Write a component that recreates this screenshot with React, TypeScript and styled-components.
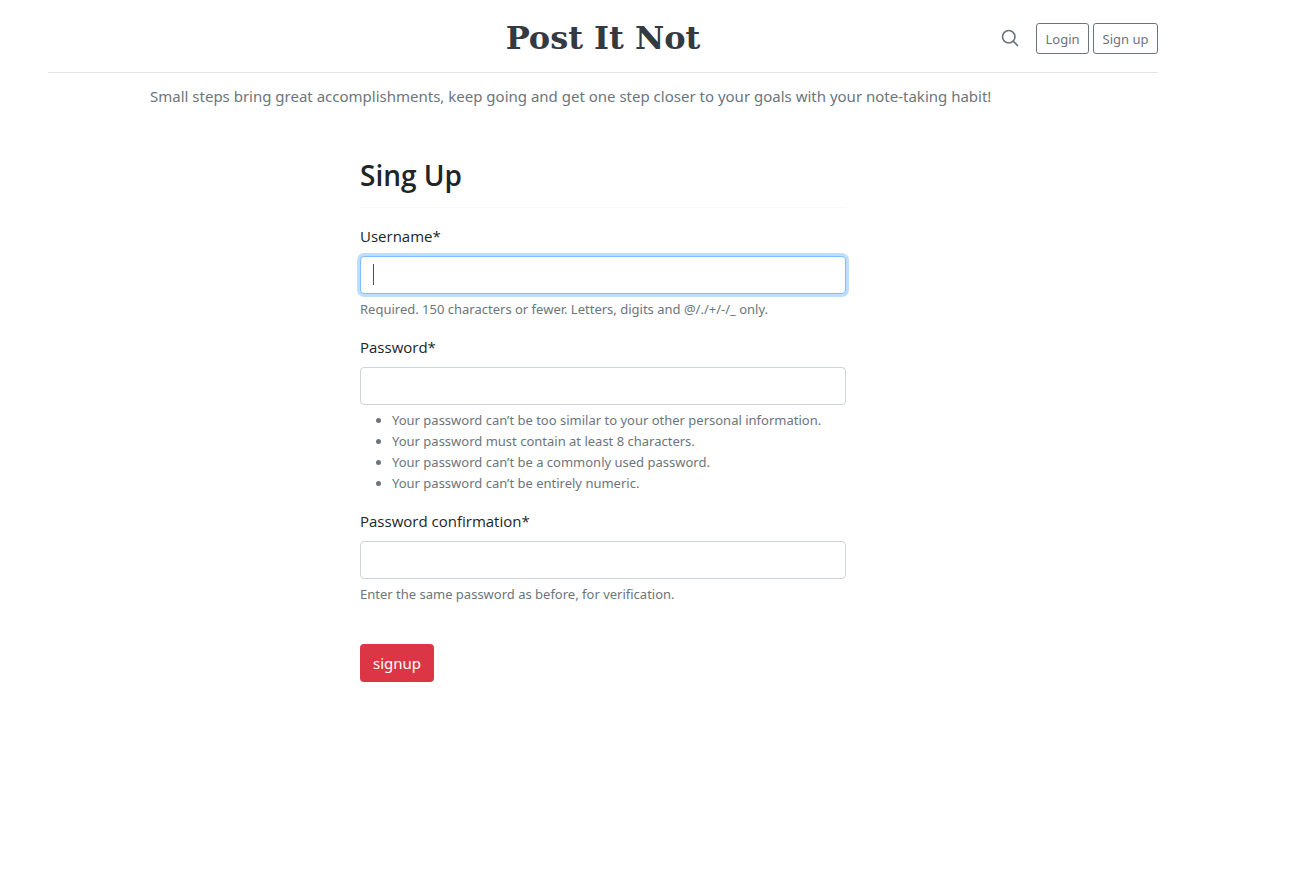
import React, { useState } from "react";
import styled, { createGlobalStyle } from "styled-components";

const mutedFont = `"Segoe UI", "Noto Sans", "Open Sans", sans-serif`;

const GlobalStyle = createGlobalStyle`
  *, *::before, *::after { box-sizing: border-box; }
  body {
    margin: 0;
    background: #fff;
    color: #212529;
    font-family: "Segoe UI", "Open Sans", "Noto Sans", sans-serif;
    font-size: 15px;
    line-height: 24px;
  }
`;

const Page = styled.div`
  padding: 0 99px 48px 0;
`;

const Container = styled.div`
  width: 100%;
  max-width: 1140px;
  margin: 0 auto;
  padding: 0 15px;
`;

const Header = styled.header`
  display: grid;
  grid-template-columns: 1fr auto 1fr;
  align-items: center;
  height: 73px;
  padding-top: 4px;
  border-bottom: 1px solid #e5e5e5;
`;

const Brand = styled.a`
  grid-column: 2;
  color: #343a40;
  font-family: Georgia, "DejaVu Serif", serif;
  font-size: 32px;
  font-weight: 700;
  line-height: 40px;
  text-decoration: none;
`;

const HeaderActions = styled.nav`
  display: flex;
  justify-content: flex-end;
  align-items: center;
  gap: 4px;
`;

const SearchLink = styled.a`
  display: flex;
  margin-right: 12px;
  color: #6c757d;
`;

const OutlineLink = styled.a<{ $width: number }>`
  min-width: ${(p) => p.$width}px;
  padding: 5px 8px 3px;
  border: 1px solid #6c757d;
  border-radius: 3px;
  color: #6c757d;
  font-family: ${mutedFont};
  font-size: 13px;
  line-height: 21px;
  text-align: center;
  text-decoration: none;
`;

const Tagline = styled.p`
  margin: 0;
  padding: 11px 0 0 102px;
  color: #6c757d;
  font-family: ${mutedFont};
`;

const Form = styled.form`
  width: 100%;
  max-width: 486px;
  margin: 47px auto 0;
`;

const Fieldset = styled.fieldset`
  min-width: 0;
  margin: 0;
  padding: 0;
  border: 0;
`;

const Legend = styled.legend`
  display: block;
  width: 100%;
  margin-bottom: 16px;
  padding: 0 0 12px;
  border-bottom: 1px solid #f8f9fa;
  font-size: 28px;
  font-weight: 600;
  line-height: 40px;
`;

const Field = styled.div`
  margin-bottom: 15px;
`;

const Label = styled.label`
  display: block;
  margin-bottom: 8px;
`;

const InputWrap = styled.div`
  position: relative;
`;

const Input = styled.input`
  display: block;
  width: 100%;
  height: 38px;
  padding: 6px 12px;
  border: 1px solid #ced4da;
  border-radius: 4px;
  background: #fff;
  color: #495057;
  caret-color: transparent;
  font: inherit;
  outline: none;

  &:not(:placeholder-shown) {
    caret-color: #495057;
  }

  &:focus {
    border-color: #80bdff;
    box-shadow: 0 0 0 3px rgba(0, 123, 255, 0.25);
  }
`;

const Caret = styled.span`
  position: absolute;
  top: 8px;
  left: 13px;
  width: 1px;
  height: 21px;
  background: #495057;
  pointer-events: none;
`;

const Help = styled.small`
  display: block;
  margin-top: 5px;
  color: #6c757d;
  font-family: ${mutedFont};
  font-size: 13px;
  line-height: 21px;
`;

const HelpList = styled.ul`
  margin: 5px 0 0;
  padding-left: 32px;
  color: #6c757d;
  font-family: ${mutedFont};
  font-size: 13px;
  line-height: 21px;
`;

const SubmitButton = styled.button`
  height: 38px;
  margin-top: 24px;
  padding: 6px 13px;
  border: 0;
  border-radius: 4px;
  background: #dc3545;
  color: #fff;
  font: inherit;
  font-family: ${mutedFont};
  cursor: pointer;
`;

const passwordRules = [
  "Your password can’t be too similar to your other personal information.",
  "Your password must contain at least 8 characters.",
  "Your password can’t be a commonly used password.",
  "Your password can’t be entirely numeric.",
];

export default function App() {
  const [username, setUsername] = useState("");
  const [focused, setFocused] = useState(true);

  return (
    <Page>
      <GlobalStyle />
      <Container>
        <Header>
          <Brand href="#">Post It Not</Brand>
          <HeaderActions>
            <SearchLink href="#" aria-label="Search">
              <svg
                width="20"
                height="20"
                viewBox="0 0 24 24"
                fill="none"
                stroke="currentColor"
                strokeWidth="2"
                strokeLinecap="round"
                strokeLinejoin="round"
              >
                <circle cx="10.5" cy="10.5" r="7.5" />
                <path d="M21 21l-5.2-5.2" />
              </svg>
            </SearchLink>
            <OutlineLink href="#" $width={53}>Login</OutlineLink>
            <OutlineLink href="#" $width={65}>Sign up</OutlineLink>
          </HeaderActions>
        </Header>
        <Tagline>
          Small steps bring great accomplishments, keep going and get one step closer to your goals
          with your note-taking habit!
        </Tagline>
        <Form onSubmit={(e) => e.preventDefault()}>
          <Fieldset>
            <Legend>Sing Up</Legend>
            <Field>
              <Label htmlFor="username">Username*</Label>
              <InputWrap>
                <Input
                  id="username"
                  type="text"
                  maxLength={150}
                  placeholder=" "
                  autoFocus
                  required
                  aria-describedby="username-help"
                  value={username}
                  onChange={(e) => setUsername(e.target.value)}
                  onFocus={() => setFocused(true)}
                  onBlur={() => setFocused(false)}
                />
                {focused && username === "" && <Caret />}
              </InputWrap>
              <Help id="username-help">
                Required. 150 characters or fewer. Letters, digits and @/./+/-/_ only.
              </Help>
            </Field>
            <Field>
              <Label htmlFor="password">Password*</Label>
              <Input
                id="password"
                type="password"
                placeholder=" "
                required
                aria-describedby="password-help"
              />
              <HelpList id="password-help">
                {passwordRules.map((rule) => (
                  <li key={rule}>{rule}</li>
                ))}
              </HelpList>
            </Field>
            <Field>
              <Label htmlFor="confirmation">Password confirmation*</Label>
              <Input
                id="confirmation"
                type="password"
                placeholder=" "
                required
                aria-describedby="confirmation-help"
              />
              <Help id="confirmation-help">Enter the same password as before, for verification.</Help>
            </Field>
          </Fieldset>
          <SubmitButton type="submit">signup</SubmitButton>
        </Form>
      </Container>
    </Page>
  );
}
